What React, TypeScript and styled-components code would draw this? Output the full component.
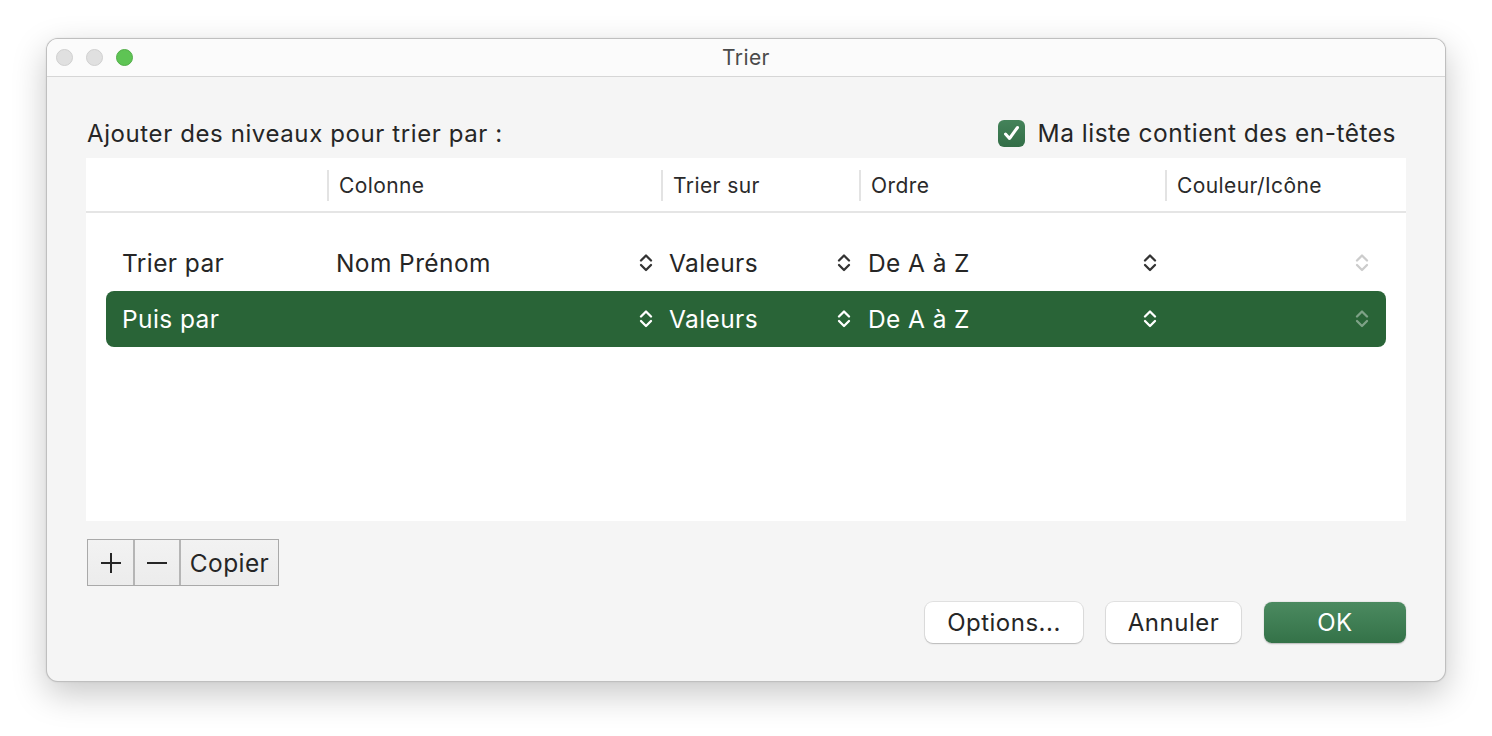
import React from "react";
import styled, { createGlobalStyle } from "styled-components";

const Global = createGlobalStyle`
  html, body { margin: 0; padding: 0; background: #ffffff; }
  body { font-family: Inter, "Noto Sans", "Liberation Sans", sans-serif; color: #262626; }
  * { box-sizing: border-box; }
`;

const Page = styled.div`
  width: 1492px;
  height: 736px;
  padding: 38px 0 0 46px;
`;

const Window = styled.div`
  width: 1400px;
  height: 644px;
  border-radius: 12px;
  background: #f5f5f5;
  border: 1px solid rgba(0, 0, 0, 0.22);
  box-shadow: 0 12px 34px rgba(0, 0, 0, 0.22), 0 0 2px rgba(0, 0, 0, 0.1);
  display: flex;
  flex-direction: column;
  overflow: hidden;
`;

const TitleBar = styled.div`
  height: 38px;
  flex: none;
  background: #fbfbfb;
  border-bottom: 1px solid #d6d6d6;
  position: relative;
  display: flex;
  align-items: center;
  padding-left: 9px;
  gap: 13px;
`;

const Light = styled.span<{ $color: string; $border: string }>`
  width: 17px;
  height: 17px;
  border-radius: 50%;
  background: ${(p) => p.$color};
  border: 1px solid ${(p) => p.$border};
`;

const Title = styled.div`
  position: absolute;
  left: 0;
  right: 0;
  top: 0;
  bottom: 0;
  display: flex;
  align-items: center;
  justify-content: center;
  font-size: 21px;
  letter-spacing: 0.4px;
  color: #4a4a4a;
  pointer-events: none;
`;

const Body = styled.div`
  flex: 1;
  display: flex;
  flex-direction: column;
  padding: 42px 39px 0 39px;
`;

const TopRow = styled.div`
  display: flex;
  justify-content: space-between;
  align-items: center;
  height: 28px;
  padding: 0 10px 0 1px;
`;

const Lead = styled.div`
  font-size: 24px;
  letter-spacing: 0.6px;
  color: #262626;
`;

const CheckLabel = styled.label`
  display: flex;
  align-items: center;
  gap: 13px;
  font-size: 24.5px;
  letter-spacing: 0.5px;
  color: #262626;
`;

const CheckBox = styled.span`
  width: 27px;
  height: 27px;
  border-radius: 6px;
  background: linear-gradient(#44835a, #336e47);
  display: flex;
  align-items: center;
  justify-content: center;
`;

const Table = styled.div`
  margin-top: 11px;
  height: 363px;
  background: #ffffff;
  display: flex;
  flex-direction: column;
`;

const Grid = `
  display: grid;
  grid-template-columns: 221px 334px 198px 306px 1fr;
  align-items: center;
`;

const Header = styled.div`
  ${Grid}
  height: 55px;
  padding: 2px 20px 0 20px;
  border-bottom: 2px solid #e5e5e5;
`;

const HeadCell = styled.div<{ $sep?: boolean }>`
  height: 31px;
  display: flex;
  align-items: center;
  padding-left: 10px;
  font-size: 21px;
  letter-spacing: 0.4px;
  color: #2a2a2a;
  border-left: ${(p) => (p.$sep ? "2px solid #e3e3e3" : "none")};
`;

const Rows = styled.div`
  padding: 22px 20px 0 20px;
  display: flex;
  flex-direction: column;
`;

const Row = styled.div<{ $selected?: boolean }>`
  ${Grid}
  height: 56px;
  border-radius: 8px;
  background: ${(p) => (p.$selected ? "#296437" : "transparent")};
  color: ${(p) => (p.$selected ? "#ffffff" : "#262626")};
`;

const Label = styled.div`
  padding-left: 16px;
  font-size: 24.5px;
  letter-spacing: 0.4px;
`;

const Cell = styled.div<{ $pl: number; $pr: number }>`
  display: flex;
  align-items: center;
  justify-content: space-between;
  padding-left: ${(p) => p.$pl}px;
  padding-right: ${(p) => p.$pr}px;
  font-size: 24.5px;
  letter-spacing: 0.4px;
  min-width: 0;
`;

const Footer = styled.div`
  margin-top: 18px;
  display: flex;
`;

const SegGroup = styled.div`
  display: flex;
  border: 1px solid #a9a9a9;
  height: 47px;
  background: linear-gradient(#f2f2f2, #ececec);
  margin-left: 1px;
`;

const SegButton = styled.div<{ $w: number }>`
  width: ${(p) => p.$w}px;
  display: flex;
  align-items: center;
  justify-content: center;
  font-size: 24.5px;
  letter-spacing: 0.4px;
  color: #262626;
  & + & { border-left: 2px solid #b5b5b5; }
`;

const Actions = styled.div`
  margin-top: 16px;
  display: flex;
  justify-content: flex-end;
  gap: 23px;
`;

const Button = styled.div<{ $w: number; $primary?: boolean }>`
  width: ${(p) => p.$w}px;
  height: 41px;
  border-radius: 8px;
  display: flex;
  align-items: center;
  justify-content: center;
  font-size: 24px;
  letter-spacing: 0.5px;
  color: ${(p) => (p.$primary ? "#ffffff" : "#262626")};
  background: ${(p) => (p.$primary ? "linear-gradient(#4b8a60, #347248)" : "#ffffff")};
  box-shadow: ${(p) =>
    p.$primary
      ? "0 0.5px 1.5px rgba(0,0,0,0.25)"
      : "0 0 0 1px rgba(0,0,0,0.08), 0 1px 1.5px rgba(0,0,0,0.18)"};
`;

const Chevrons = ({ color }: { color: string }) => (
  <svg width="14" height="18" viewBox="0 0 14 18" fill="none">
    <polyline points="2,6.5 7,1.5 12,6.5" stroke={color} strokeWidth="2.3" strokeLinecap="round" strokeLinejoin="round" />
    <polyline points="2,11 7,16 12,11" stroke={color} strokeWidth="2.3" strokeLinecap="round" strokeLinejoin="round" />
  </svg>
);

type RowData = { label: string; col: string; on: string; order: string; selected?: boolean };

const rows: RowData[] = [
  { label: "Trier par", col: "Nom Prénom", on: "Valeurs", order: "De A à Z" },
  { label: "Puis par", col: "", on: "Valeurs", order: "De A à Z", selected: true },
];

export default function App() {
  return (
    <Page>
      <Global />
      <Window>
        <TitleBar>
          <Light $color="#e0e0e0" $border="#cfcfcf" />
          <Light $color="#e0e0e0" $border="#cfcfcf" />
          <Light $color="#5ec454" $border="#52ad49" />
          <Title>Trier</Title>
        </TitleBar>
        <Body>
          <TopRow>
            <Lead>Ajouter des niveaux pour trier par :</Lead>
            <CheckLabel>
              <CheckBox>
                <svg width="19" height="19" viewBox="0 0 19 19" fill="none">
                  <polyline points="3.5,10 7.5,14.5 15.5,3.5" stroke="#ffffff" strokeWidth="3" strokeLinecap="round" strokeLinejoin="round" />
                </svg>
              </CheckBox>
              Ma liste contient des en-têtes
            </CheckLabel>
          </TopRow>
          <Table>
            <Header>
              <HeadCell />
              <HeadCell $sep>Colonne</HeadCell>
              <HeadCell $sep>Trier sur</HeadCell>
              <HeadCell $sep>Ordre</HeadCell>
              <HeadCell $sep>Couleur/Icône</HeadCell>
            </Header>
            <Rows>
              {rows.map((r) => {
                const c = r.selected ? "#ffffff" : "#333333";
                const faded = r.selected ? "rgba(255,255,255,0.4)" : "#cccccc";
                return (
                  <Row key={r.label} $selected={r.selected}>
                    <Label>{r.label}</Label>
                    <Cell $pl={9} $pr={8}>
                      <span>{r.col}</span>
                      <Chevrons color={c} />
                    </Cell>
                    <Cell $pl={8} $pr={8}>
                      <span>{r.on}</span>
                      <Chevrons color={c} />
                    </Cell>
                    <Cell $pl={9} $pr={8}>
                      <span>{r.order}</span>
                      <Chevrons color={c} />
                    </Cell>
                    <Cell $pl={10} $pr={17}>
                      <span />
                      <Chevrons color={faded} />
                    </Cell>
                  </Row>
                );
              })}
            </Rows>
          </Table>
          <Footer>
            <SegGroup>
              <SegButton $w={45}>
                <svg width="22" height="22" viewBox="0 0 22 22">
                  <path d="M11 1v20M1 11h20" stroke="#262626" strokeWidth="2" />
                </svg>
              </SegButton>
              <SegButton $w={46}>
                <svg width="22" height="22" viewBox="0 0 22 22">
                  <path d="M1 11h20" stroke="#262626" strokeWidth="2" />
                </svg>
              </SegButton>
              <SegButton $w={99}>Copier</SegButton>
            </SegGroup>
          </Footer>
          <Actions>
            <Button $w={158}>Options...</Button>
            <Button $w={135}>Annuler</Button>
            <Button $w={142} $primary>OK</Button>
          </Actions>
        </Body>
      </Window>
    </Page>
  );
}
